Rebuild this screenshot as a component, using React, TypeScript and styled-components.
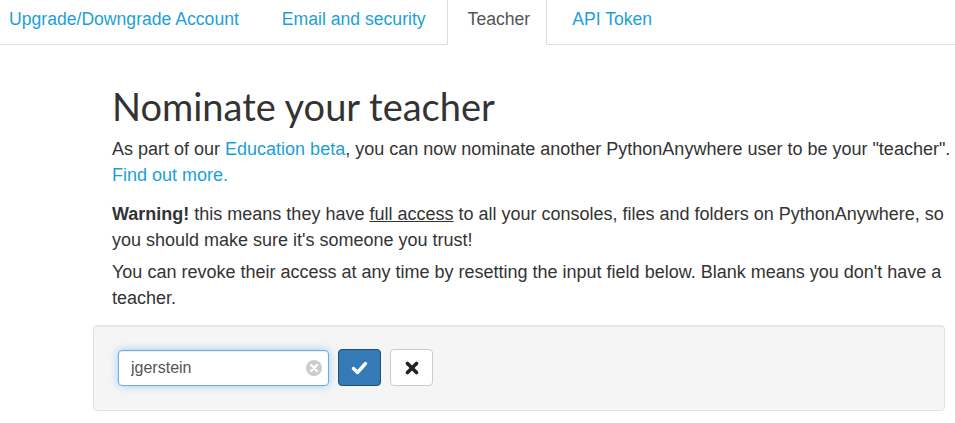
import { useState } from 'react'
import styled, { createGlobalStyle } from 'styled-components'

const Global = createGlobalStyle`
  html, body {
    margin: 0;
    padding: 0;
    background: #fff;
    font-family: "Liberation Sans", Arial, sans-serif;
    color: #333;
  }
`

const Tabs = styled.ul`
  display: flex;
  list-style: none;
  margin: -9px 0 0 0;
  padding: 0;
  border-bottom: 1px solid #ddd;
`
const Tab = styled.li<{ $active?: boolean }>`
  margin-bottom: -1px;
  padding: 17px 20px 14px 8px;
  font-size: 17.6px;
  line-height: 21px;
  color: ${p => (p.$active ? '#555' : '#1c9fd9')};
  background: ${p => (p.$active ? '#fff' : 'transparent')};
  border: 1px solid ${p => (p.$active ? '#ddd' : 'transparent')};
  border-bottom-color: ${p => (p.$active ? '#fff' : 'transparent')};
  border-radius: 4px 4px 0 0;
  &:nth-child(2) { padding-left: 21px; }
  &:nth-child(3) { padding-left: 20px; padding-right: 16px; }
  &:nth-child(4) { padding-left: 24px; }
`
const Main = styled.main`
  padding: 0 10px 0 93px;
`
const Inner = styled.div`
  padding-left: 19px;
  margin-right: -10px;
`
const Title = styled.h1`
  margin: 39px 0 8px;
  font-family: Lato, "Open Sans", sans-serif;
  font-weight: 400;
  font-size: 38px;
  line-height: 44px;
  color: #333;
`
const P = styled.p<{ $gap?: number }>`
  margin: 0 0 ${p => p.$gap ?? 7}px;
  font-size: 18px;
  line-height: 26px;
`
const A = styled.a`
  color: #1c9fd9;
  text-decoration: none;
`
const U = styled.span`
  text-decoration: underline;
`
const Well = styled.div`
  margin-top: 14px;
  display: flex;
  align-items: center;
  gap: 9px;
  padding: 23px 24px 24px;
  background: #f5f5f5;
  border: 1px solid #e3e3e3;
  border-radius: 4px;
  box-shadow: inset 0 1px 1px rgba(0, 0, 0, 0.05);
`
const InputWrap = styled.div`
  position: relative;
  width: 211px;
  height: 36px;
`
const Input = styled.input`
  box-sizing: border-box;
  width: 100%;
  height: 100%;
  padding: 6px 28px 6px 12px;
  font-family: "Liberation Sans", Arial, sans-serif;
  font-size: 16px;
  color: #555;
  border: 1px solid #66afe9;
  border-radius: 4px;
  outline: none;
  box-shadow: inset 0 1px 1px rgba(0, 0, 0, 0.075), 0 0 8px rgba(102, 175, 233, 0.6);
`
const Clear = styled.span`
  position: absolute;
  right: 7px;
  top: 10px;
  width: 16px;
  height: 16px;
`
const Btn = styled.button<{ $primary?: boolean }>`
  display: flex;
  align-items: center;
  justify-content: center;
  width: 43px;
  height: 37px;
  padding: 0;
  border-radius: 4px;
  border: 1px solid ${p => (p.$primary ? '#204d74' : '#ccc')};
  background: ${p => (p.$primary ? '#337ab7' : '#fff')};
`

export default function App() {
  const [name, setName] = useState('jgerstein')
  return (
    <>
      <Global />
      <Tabs>
        <Tab>Upgrade/Downgrade Account</Tab>
        <Tab>Email and security</Tab>
        <Tab $active>Teacher</Tab>
        <Tab>API Token</Tab>
      </Tabs>
      <Main>
        <Inner>
          <Title>Nominate your teacher</Title>
          <P $gap={13}>
            As part of our <A href="#">Education beta</A>, you can now nominate another
            PythonAnywhere user to be your "teacher". <A href="#">Find out more.</A>
          </P>
          <P $gap={6}>
            <b>Warning!</b> this means they have <U>full access</U> to all your consoles, files
            and folders on PythonAnywhere, so you should make sure it's someone you trust!
          </P>
          <P $gap={0}>
            You can revoke their access at any time by resetting the input field below. Blank
            means you don't have a teacher.
          </P>
        </Inner>
        <Well>
          <InputWrap>
            <Input value={name} onChange={e => setName(e.target.value)} spellCheck />
            <Clear>
              <svg width="16" height="16" viewBox="0 0 16 16">
                <circle cx="8" cy="8" r="8" fill="#ccc" />
                <path d="M5 5l6 6M11 5l-6 6" stroke="#fff" strokeWidth="2.4" strokeLinecap="round" />
              </svg>
            </Clear>
          </InputWrap>
          <Btn $primary>
            <svg width="17" height="14" viewBox="0 0 17 14">
              <path d="M2.5 7.5l4 4 8-9" fill="none" stroke="#fff" strokeWidth="3.4" strokeLinejoin="round" strokeLinecap="round" />
            </svg>
          </Btn>
          <Btn>
            <svg width="14" height="14" viewBox="0 0 14 14">
              <path d="M2.5 2.5l9 9M11.5 2.5l-9 9" stroke="#222" strokeWidth="3.6" strokeLinecap="round" />
            </svg>
          </Btn>
        </Well>
      </Main>
    </>
  )
}
